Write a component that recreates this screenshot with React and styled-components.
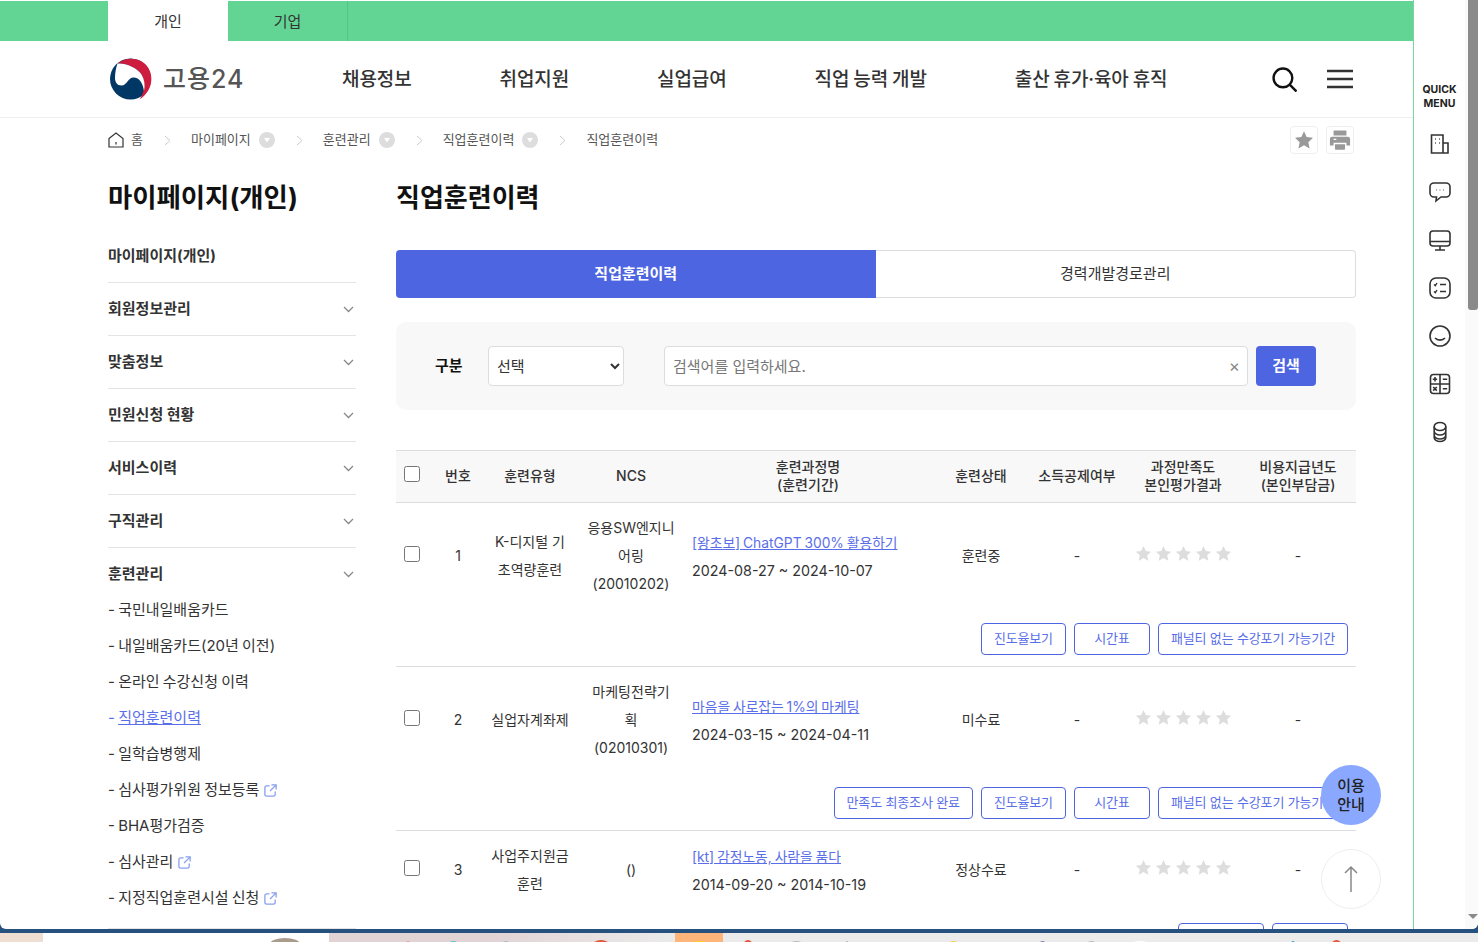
import React from 'react';
import styled, { createGlobalStyle } from 'styled-components';

const Global = createGlobalStyle`
  html, body { margin: 0; padding: 0; height: 942px; overflow: hidden; background: #26517f; }
  body, input, select, button, table { font-family: Inter, "Noto Sans CJK KR", "Noto Sans", sans-serif; }
  body { line-height: 1.2; }
  * { box-sizing: border-box; }
`;

const Screen = styled.div`display: flex; flex-direction: column; width: 1478px; height: 942px;`;
const Browser = styled.div`
  position: relative; display: flex; height: 929px; background: #fff; overflow: hidden;
  border-radius: 0 0 6px 6px;
`;
const Page = styled.div`width: 1413px; flex: none; overflow: hidden; padding-top: 1px;`;

const TopBar = styled.div`display: flex; height: 40px; padding-left: 108px; background: #62d594;`;
const TopTab = styled.div`
  display: flex; align-items: center; justify-content: center; width: ${p => p.$w}px; padding-top: 1px; font-size: 15px; color: #333;
  background: ${p => (p.$active ? '#fff' : 'transparent')};
  border-right: ${p => (p.$active ? 'none' : '1px solid #55c586')};
`;

const Header = styled.header`
  display: flex; align-items: center; height: 77px; padding: 0 60px 0 109px; border-bottom: 1px solid #eee;
`;
const Logo = styled.div`display: flex; align-items: center; gap: 11px; width: 233px;`;
const LogoText = styled.span`font-size: 25px; font-weight: 500; color: #555; letter-spacing: 1px; line-height: 1;`;
const Nav = styled.nav`display: flex; gap: 88px; padding-top: 2px;`;
const NavItem = styled.span`font-size: 19px; font-weight: 500; color: #333; white-space: nowrap; letter-spacing: -0.1px; word-spacing: -1px;`;
const HeadIcons = styled.div`display: flex; align-items: center; gap: 30px; margin-left: auto;`;

const Crumbs = styled.div`display: flex; align-items: center; height: 44px; padding: 0 59px 0 108px;`;
const CrumbText = styled.span`font-size: 13px; color: #555; white-space: nowrap; margin-left: ${p => p.$ml || 0}px;`;
const Chip = styled.span`
  display: flex; align-items: center; justify-content: center; width: 16px; height: 16px; border-radius: 50%;
  background: #ddd; margin-left: 8px;
`;
const Sep = styled.span`display: flex; margin: 0 20px 0 21px;`;
const CrumbTools = styled.div`display: flex; gap: 8px; margin-left: auto;`;
const ToolBtn = styled.span`
  display: flex; align-items: center; justify-content: center; width: 28px; height: 28px;
  border: 1px solid #eee; border-radius: 4px;
`;

const Main = styled.div`display: flex; gap: 40px; padding-left: 108px;`;
const Side = styled.aside`width: 248px; flex: none; padding-top: 17px;`;
const SideTitle = styled.h2`margin: 0 0 15px; font-size: 26.4px; line-height: 36px; font-weight: 700; color: #111; white-space: nowrap;`;
const SideItem = styled.div`
  display: flex; align-items: center; justify-content: space-between; height: 53px; border-bottom: 1px solid #e4e4e4;
  font-size: 15px; font-weight: 700; color: #333;
`;
const ChevronBox = styled.span`display: flex; margin-right: 2px; margin-top: ${p => p.$mt || 0}px;`;
const OpenHead = styled(SideItem)`height: 43px; align-items: flex-start; padding: 15px 0 0; line-height: 22px; border-bottom: 0;`;
const SubList = styled.ul`margin: 0; padding: 0 0 13px; list-style: none; border-bottom: 1px solid #e4e4e4;`;
const SubItem = styled.li`
  display: flex; align-items: center; gap: 4px; height: 36px; padding-top: 2px; font-size: 15px; word-spacing: -1px; color: ${p => (p.$on ? '#5a6ee8' : '#333')};
`;
const SubLink = styled.span`text-decoration: underline;`;

const Content = styled.main`width: 960px; flex: none; padding-top: 18px;`;
const Title = styled.h1`margin: 0 0 34px; font-size: 26px; line-height: 36px; font-weight: 700; color: #111;`;
const Tabs = styled.div`display: flex; height: 48px; font-size: 15px;`;
const Tab = styled.div`
  flex: 1; display: flex; align-items: center; justify-content: center;
  ${p => (p.$on
    ? 'background:#4d65e0;color:#fff;font-weight:700;border-radius:4px 0 0 4px;'
    : 'border:1px solid #ddd;border-left:0;color:#333;border-radius:0 4px 4px 0;')}
`;
const SearchBox = styled.div`
  display: flex; align-items: center; margin-top: 24px; height: 88px; padding: 0 40px 0 39px; background: #f8f8f8; border-radius: 10px;
`;
const SearchLabel = styled.label`font-size: 15px; font-weight: 700; color: #111; width: 53px;`;
const Select = styled.select`
  width: 136px; height: 40px; padding: 0 4px; border: 1px solid #ddd; border-radius: 4px; background: #fff; font-size: 15px; color: #333;
`;
const InputWrap = styled.div`position: relative; width: 584px; margin-left: 40px;`;
const Input = styled.input`
  display: block; width: 100%; height: 40px; padding: 0 8px; border: 1px solid #ddd; border-radius: 4px; font-size: 15px; background: #fff;
  &::placeholder { color: #777; opacity: 1; }
`;
const Clear = styled.span`position: absolute; right: 8px; top: 10px; font-size: 17px; line-height: 20px; color: #888;`;
const SearchBtn = styled.button`
  width: 60px; height: 40px; margin-left: 8px; border: 0; border-radius: 4px; background: #4d65e0; color: #fff; font-size: 15px; font-weight: 700; line-height: 1.2;
`;

const Table = styled.table`
  width: 960px; margin-top: 40px; table-layout: fixed; border-collapse: separate; border-spacing: 0; font-size: 14px; color: #333;
`;
const Th = styled.th`
  height: 53px; padding: 0 ${p => p.$pr || 0}px 2px 0; border-top: 1px solid #ddd; border-bottom: 1px solid #ddd; background: #f8f8f8;
  font-size: 14px; font-weight: 500; line-height: 18px; color: #333; text-align: center; vertical-align: middle;
`;
const Td = styled.td`
  padding: 11px ${p => p.$pr || 0}px 11px 0; line-height: 28px; text-align: center; vertical-align: middle;
`;
const NameCell = styled(Td)`text-align: left; padding: 12px 0 10px 2px; font-size: 14.3px; white-space: nowrap;`;
const CourseLink = styled.a`display: block; font-size: 13.8px; word-spacing: -1px; color: #5a6ee8; text-decoration: underline;`;
const Check = styled.input.attrs({ type: 'checkbox' })`display: block; width: 16px; height: 16px; margin: 0 auto 4px 8px;`;
const ActionCell = styled.td`padding: 14px 8px 11px 0; border-bottom: 1px solid #ddd;`;
const Actions = styled.div`display: flex; justify-content: flex-end; gap: 8px;`;
const ActionBtn = styled.button`
  height: 32px; min-width: ${p => p.$w || 76}px; padding: 0 12px; border: 1px solid #4d65e0; border-radius: 4px; background: #fff;
  font-size: 13px; line-height: 1.2; letter-spacing: -0.15px; color: #5a6ee8; white-space: nowrap;
`;
const Stars = styled.div`display: flex; justify-content: center; gap: 3px; margin-top: -6px;`;

const Rail = styled.aside`
  width: 52px; flex: none; display: flex; flex-direction: column; align-items: center; padding-top: 83px;
  border-left: 1px solid #7fd3a0;
`;
const QuickTitle = styled.div`font-size: 10.5px; line-height: 14px; font-weight: 700; color: #222; text-align: center; margin-bottom: 9px;`;
const QuickIcon = styled.span`display: flex; align-items: center; justify-content: center; height: 48px; color: #333;`;
const Bar = styled.div`width: 13px; flex: none; display: flex; flex-direction: column; align-items: flex-end; background: #fafafa;`;
const Thumb = styled.div`width: 10px; height: 310px; background: #8a8a8a; border-radius: 0 0 3px 3px;`;
const BarArrow = styled.div`
  margin: auto 0 10px; width: 0; height: 0; border-left: 5px solid transparent; border-right: 5px solid transparent; border-top: 5px solid #8a8a8a;
`;

const Float = styled.div`
  position: absolute; left: 1321px; top: ${p => p.$top}px; width: 60px; height: 60px; border-radius: 50%;
  display: flex; align-items: center; justify-content: center; text-align: center;
`;
const Guide = styled(Float)`background: #8aa8ff; color: #222; font-size: 15px; font-weight: 500; line-height: 19px;`;
const ToTop = styled(Float)`background: #fff; border: 1px solid #eee;`;

const Strip = styled.div`position: relative; display: flex; height: 9px; margin-top: 4px; background: #ebebeb; overflow: hidden;`;
const StripPart = styled.div`
  width: ${p => p.$w}px; flex: none; background: ${p => p.$bg};
`;
const Tip = styled.span`
  position: absolute; left: ${p => p.$x}px; top: ${p => p.$y}px; width: ${p => p.$w}px; height: 12px; border-radius: 50% 50% 0 0; background: ${p => p.$c};
`;

const Chevron = () => (
  <svg width="11" height="12" viewBox="0 0 11 12" fill="none" stroke="#888" strokeWidth="1.3"><path d="M1 4l4.500 4.500L10 4" /></svg>
);
const ChipDown = () => (
  <svg width="8" height="8" viewBox="0 0 8 8"><path d="M1 2h6L4 6.500z" fill="#fff" /></svg>
);
const SepIcon = () => (
  <svg width="7" height="11" viewBox="0 0 7 11" fill="none" stroke="#ccc" strokeWidth="1"><path d="M1 1l5 4.500L1 10" /></svg>
);
const Star = ({ s = 16, c = '#ddd' }) => (
  <svg width={s} height={s} viewBox="0 0 24 24" fill={c}><path d="M12 1.500l3.200 7 7.600.9-5.600 5.200 1.500 7.500L12 18.300l-6.700 3.800 1.500-7.500L1.200 9.400l7.600-.9z" /></svg>
);
const Ext = () => (
  <svg width="15" height="15" viewBox="0 0 16 16" fill="none" stroke="#8aa0f0" strokeWidth="1.4">
    <path d="M7 3H4a2 2 0 0 0-2 2v7a2 2 0 0 0 2 2h7a2 2 0 0 0 2-2V9" />
    <path d="M9 2h5v5M14 2L7.500 8.500" />
  </svg>
);
const Printer = () => (
  <svg width="22" height="22" viewBox="0 0 24 24" fill="#999">
    <path d="M6 1.500h12a1 1 0 0 1 1 1V7H5V2.500a1 1 0 0 1 1-1z" />
    <path fillRule="evenodd" d="M3.500 8.500h17a2.500 2.500 0 0 1 2.500 2.500v7h-4v-3H5v3H1v-7a2.500 2.500 0 0 1 2.500-2.500zM5 10.500h3v1.500H5z" />
    <path d="M6.500 16.500h11v5a1 1 0 0 1-1 1h-9a1 1 0 0 1-1-1z" />
  </svg>
);

const LogoMark = () => (
  <svg width="43" height="42" viewBox="0 0 43 42">
    <circle cx="21.500" cy="21" r="20.500" fill="#003764" />
    <path d="M8.500 5.500C17-1.500 32-1 39 9.500c6.500 10 3.500 24-8.500 32 6-8 6-18.500 2-25C28.500 10 17 5 8.500 5.500z" fill="#cd1c3e" />
    <path d="M8.500 5.500C17 5 28.500 10 32.500 16.500c3.200 5.200 3.800 11 2.500 16.500-1-7.500-4.500-13.500-10.500-13.500-5.500 0-6.500 8-12 8-4.500 0-6.500-3.500-6.500-7.500 0-5 1-10.500 2.500-14.500z" fill="#fff" />
  </svg>
);

const qi = { width: 24, height: 24, viewBox: '0 0 24 24', fill: 'none', stroke: 'currentColor', strokeWidth: 1.6 };
const quick = [
  <svg {...qi}><path d="M3.500 3h11.500v18H3.500zM15 11h5v10h-5" /><path d="M7 7h.6M11 7h.6M7 11h.6M11 11h.6" strokeWidth="2" /></svg>,
  <svg {...qi}><path d="M6 3h12a4 4 0 0 1 4 4v6a4 4 0 0 1-4 4h-5l-5 4 .5-4H6a4 4 0 0 1-4-4V7a4 4 0 0 1 4-4z" /><path d="M8 10h.5M11.700 10h.5M15.400 10h.5" strokeWidth="1.300" /></svg>,
  <svg {...qi}><rect x="2" y="3" width="20" height="15" rx="3" /><path d="M2 13.500h20M12 18v4M7 22h10" /></svg>,
  <svg {...qi}><rect x="2" y="2" width="20" height="20" rx="6" /><path d="M6 8.500l1.300 1.200L9 7M6 15.500l1.300 1.200L9 14M12 8.500h6M12 15.500h6" strokeWidth="1.400" /></svg>,
  <svg {...qi}><circle cx="12" cy="12" r="10" /><path d="M7 14c2.500 2.800 7.500 2.800 10 0" /></svg>,
  <svg {...qi}><rect x="2.500" y="2.500" width="19" height="19" rx="3" /><path d="M12 2.500v19M2.500 12h19" /><path d="M4.800 7.200h4.400M7 5v4.400M14.800 7.200h4.400M5.200 15l3.600 3.600M8.800 15l-3.600 3.600M14.800 16.800h4.400" /><path d="M17 14.700h.01M17 18.900h.01" strokeWidth="1.800" /></svg>,
  <svg {...qi}><ellipse cx="12" cy="6.500" rx="5.800" ry="4" /><path d="M6.200 6.500v11c0 2.200 2.600 4 5.800 4s5.800-1.800 5.800-4v-11M6.200 11c0 2.200 2.600 4 5.800 4s5.800-1.800 5.800-4M6.200 15c0 2.200 2.600 4 5.800 4s5.800-1.800 5.800-4" /></svg>,
];

const sideItems = ['회원정보관리', '맞춤정보', '민원신청 현황', '서비스이력', '구직관리'];
const subItems = [
  ['국민내일배움카드'], ['내일배움카드(20년 이전)'], ['온라인 수강신청 이력'], ['직업훈련이력', 'on'], ['일학습병행제'],
  ['심사평가위원 정보등록', 'ext'], ['BHA평가검증'], ['심사관리', 'ext'], ['지정직업훈련시설 신청', 'ext'],
];
const rows = [
  { no: 1, type: ['K-디지털 기', '초역량훈련'], ncs: ['응용SW엔지니', '어링', '(20010202)'], name: '[왕초보] ChatGPT 300% 활용하기', date: '2024-08-27 ~ 2024-10-07', state: '훈련중', btns: [{ t: '진도율보기' }, { t: '시간표' }, { t: '패널티 없는 수강포기 가능기간' }] },
  { no: 2, type: ['실업자계좌제'], ncs: ['마케팅전략기', '획', '(02010301)'], name: '마음을 사로잡는 1%의 마케팅', date: '2024-03-15 ~ 2024-04-11', state: '미수료', btns: [{ t: '만족도 최종조사 완료' }, { t: '진도율보기' }, { t: '시간표' }, { t: '패널티 없는 수강포기 가능기간' }] },
  { no: 3, type: ['사업주지원금', '훈련'], ncs: ['()'], name: '[kt] 감정노동, 사람을 품다', date: '2014-09-20 ~ 2014-10-19', state: '정상수료', btns: [{ w: 86 }, { w: 76 }] },
];
const lines = arr => arr.map((t, i) => <React.Fragment key={i}>{i > 0 && <br />}{t}</React.Fragment>);

export default function App() {
  return (
    <Screen>
      <Global />
      <Browser>
        <Page>
          <TopBar>
            <TopTab $w={120} $active>개인</TopTab>
            <TopTab $w={120}>기업</TopTab>
          </TopBar>
          <Header>
            <Logo><LogoMark /><LogoText>고용24</LogoText></Logo>
            <Nav>
              {['채용정보', '취업지원', '실업급여', '직업 능력 개발', '출산 휴가·육아 휴직'].map(t => <NavItem key={t}>{t}</NavItem>)}
            </Nav>
            <HeadIcons>
              <svg width="25" height="25" viewBox="0 0 24 24" fill="none" stroke="#111" strokeWidth="2.300"><circle cx="10.500" cy="10.500" r="9" /><path d="M17 17l6.500 6.500" /></svg>
              <svg width="26" height="20" viewBox="0 0 26 20" fill="none" stroke="#333" strokeWidth="2.500"><path d="M0 2h26M0 10h26M0 18h26" /></svg>
            </HeadIcons>
          </Header>
          <Crumbs>
            <svg width="16" height="16" viewBox="0 0 16 16" fill="none" stroke="#333" strokeWidth="1.200"><path d="M1 6.500L8 1l7 5.500V15H1zM8 10v2.500" /></svg>
            <CrumbText $ml={7}>홈</CrumbText>
            <Sep><SepIcon /></Sep>
            <CrumbText>마이페이지</CrumbText><Chip><ChipDown /></Chip>
            <Sep><SepIcon /></Sep>
            <CrumbText>훈련관리</CrumbText><Chip><ChipDown /></Chip>
            <Sep><SepIcon /></Sep>
            <CrumbText>직업훈련이력</CrumbText><Chip><ChipDown /></Chip>
            <Sep><SepIcon /></Sep>
            <CrumbText>직업훈련이력</CrumbText>
            <CrumbTools>
              <ToolBtn><Star s={20} c="#999" /></ToolBtn>
              <ToolBtn><Printer /></ToolBtn>
            </CrumbTools>
          </Crumbs>
          <Main>
            <Side>
              <SideTitle>마이페이지(개인)</SideTitle>
              <SideItem>마이페이지(개인)</SideItem>
              {sideItems.map(t => <SideItem key={t}>{t}<ChevronBox><Chevron /></ChevronBox></SideItem>)}
              <OpenHead>훈련관리<ChevronBox $mt={5}><Chevron /></ChevronBox></OpenHead>
              <SubList>
                {subItems.map(([t, k]) => (
                  <SubItem key={t} $on={k === 'on'}>
                    <span>- {k === 'on' ? <SubLink>{t}</SubLink> : t}</span>
                    {k === 'ext' && <Ext />}
                  </SubItem>
                ))}
              </SubList>
            </Side>
            <Content>
              <Title>직업훈련이력</Title>
              <Tabs>
                <Tab $on>직업훈련이력</Tab>
                <Tab>경력개발경로관리</Tab>
              </Tabs>
              <SearchBox>
                <SearchLabel>구분</SearchLabel>
                <Select defaultValue="선택"><option>선택</option></Select>
                <InputWrap>
                  <Input placeholder="검색어를 입력하세요." />
                  <Clear>×</Clear>
                </InputWrap>
                <SearchBtn>검색</SearchBtn>
              </SearchBox>
              <Table>
                <colgroup>
                  <col width="32" /><col width="60" /><col width="84" /><col width="118" /><col width="236" />
                  <col width="110" /><col width="82" /><col width="130" /><col width="108" />
                </colgroup>
                <thead>
                  <tr>
                    <Th><Check /></Th>
                    <Th>번호</Th>
                    <Th>훈련유형</Th>
                    <Th>NCS</Th>
                    <Th>훈련과정명<br />(훈련기간)</Th>
                    <Th>훈련상태</Th>
                    <Th>소득공제여부</Th>
                    <Th>과정만족도<br />본인평가결과</Th>
                    <Th $pr={8}>비용지급년도<br />(본인부담금)</Th>
                  </tr>
                </thead>
                <tbody>
                  {rows.map(r => (
                    <React.Fragment key={r.no}>
                      <tr>
                        <Td><Check /></Td>
                        <Td>{r.no}</Td>
                        <Td>{lines(r.type)}</Td>
                        <Td>{lines(r.ncs)}</Td>
                        <NameCell><CourseLink>{r.name}</CourseLink>{r.date}</NameCell>
                        <Td>{r.state}</Td>
                        <Td>-</Td>
                        <Td><Stars>{[0, 1, 2, 3, 4].map(i => <Star key={i} s={17} />)}</Stars></Td>
                        <Td $pr={8}>-</Td>
                      </tr>
                      <tr>
                        <ActionCell colSpan={9}>
                          <Actions>{r.btns.map((b, i) => <ActionBtn key={i} $w={b.w}>{b.t}</ActionBtn>)}</Actions>
                        </ActionCell>
                      </tr>
                    </React.Fragment>
                  ))}
                </tbody>
              </Table>
            </Content>
          </Main>
        </Page>
        <Rail>
          <QuickTitle>QUICK<br />MENU</QuickTitle>
          {quick.map((q, i) => <QuickIcon key={i}>{q}</QuickIcon>)}
        </Rail>
        <Bar><Thumb /><BarArrow /></Bar>
        <Guide $top={765}>이용<br />안내</Guide>
        <ToTop $top={849}>
          <svg width="14" height="28" viewBox="0 0 14 28" fill="none" stroke="#888" strokeWidth="1.500"><path d="M7 27V2M1 8l6-6 6 6" /></svg>
        </ToTop>
      </Browser>
      <Strip>
        <StripPart $w={43} $bg="#efdfd3" />
        <StripPart $w={286} $bg="#fff" />
        <StripPart $w={346} $bg="linear-gradient(90deg,#e2d3d5 0%,#e2d3d5 45%,#ebebeb 100%)" />
        <StripPart $w={48} $bg="#ffb57a" />
        <Tip $x={270} $y={5} $w={30} $c="#a89c8c" />
        <Tip $x={405} $y={8} $w={6} $c="#e88a9a" />
        <Tip $x={447} $y={8} $w={13} $c="#58c0c8" />
        <Tip $x={500} $y={8} $w={12} $c="#a8bcc8" />
        <Tip $x={592} $y={7} $w={18} $c="#e2553a" />
        <Tip $x={688} $y={8} $w={22} $c="#ffd21f" />
        <Tip $x={743} $y={7} $w={10} $c="#e2553a" />
        <Tip $x={788} $y={8} $w={17} $c="#bbb" />
        <Tip $x={845} $y={8} $w={4} $c="#aaa" />
        <Tip $x={947} $y={8} $w={13} $c="#f4cf4a" />
        <Tip $x={1038} $y={8} $w={9} $c="#8a78b8" />
        <Tip $x={1085} $y={8} $w={13} $c="#bbb" />
        <Tip $x={1128} $y={8} $w={24} $c="#fff" />
        <Tip $x={1290} $y={8} $w={6} $c="#3a9ac8" />
        <Tip $x={1331} $y={7} $w={11} $c="#e2553a" />
      </Strip>
    </Screen>
  );
}
